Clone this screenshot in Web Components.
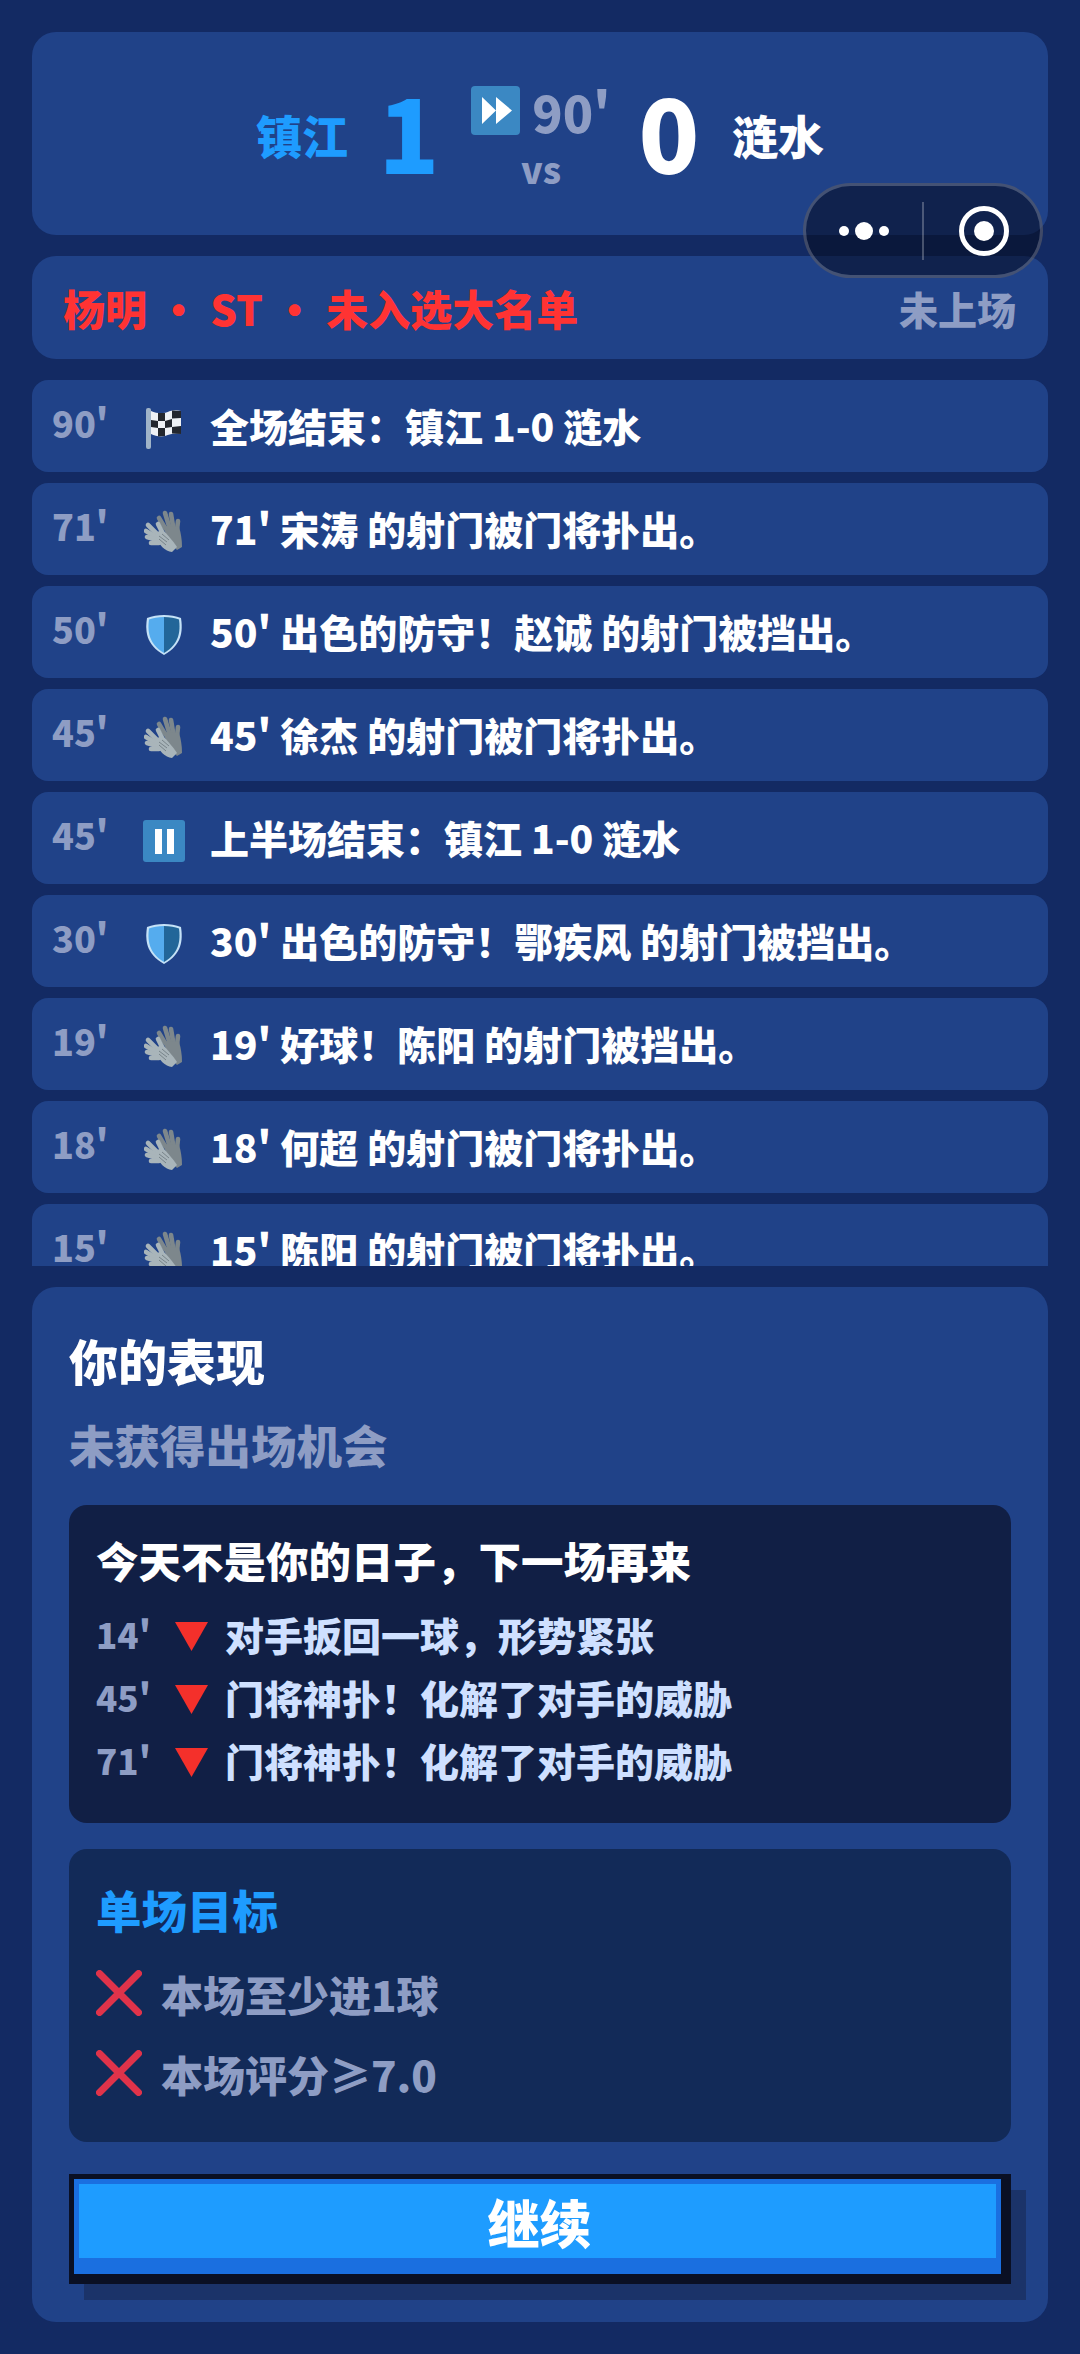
<!DOCTYPE html>
<html lang="zh">
<head>
<meta charset="utf-8">
<title>比赛结果</title>
<style>
  html, body { margin: 0; height: 100%; }
  body {
    background: #132a63;
    color: #fff;
    font-family: "Noto Sans CJK SC", "Noto Sans", sans-serif;
    font-weight: 900;
  }
</style>
</head>
<body>
<match-page>
  <match-header slot="header" home="镇江" away="涟水" home-score="1" away-score="0" minute="90'"></match-header>
  <player-bar slot="player" status="未上场">杨明 · ST · 未入选大名单</player-bar>

  <event-row time="90'" icon="flag">全场结束：镇江 1-0 涟水</event-row>
  <event-row time="71'" icon="gloves">71' 宋涛 的射门被门将扑出。</event-row>
  <event-row time="50'" icon="shield">50' 出色的防守！赵诚 的射门被挡出。</event-row>
  <event-row time="45'" icon="gloves">45' 徐杰 的射门被门将扑出。</event-row>
  <event-row time="45'" icon="pause">上半场结束：镇江 1-0 涟水</event-row>
  <event-row time="30'" icon="shield">30' 出色的防守！鄂疾风 的射门被挡出。</event-row>
  <event-row time="19'" icon="gloves">19' 好球！陈阳 的射门被挡出。</event-row>
  <event-row time="18'" icon="gloves">18' 何超 的射门被门将扑出。</event-row>
  <event-row time="15'" icon="gloves">15' 陈阳 的射门被门将扑出。</event-row>

  <perf-panel slot="panel" heading="你的表现" sub="未获得出场机会">
    <moment-box heading="今天不是你的日子，下一场再来">
      <moment-line time="14'">对手扳回一球，形势紧张</moment-line>
      <moment-line time="45'">门将神扑！化解了对手的威胁</moment-line>
      <moment-line time="71'">门将神扑！化解了对手的威胁</moment-line>
    </moment-box>
    <goal-box heading="单场目标">
      <goal-item>本场至少进1球</goal-item>
      <goal-item>本场评分≥7.0</goal-item>
    </goal-box>
    <pixel-button>继续</pixel-button>
  </perf-panel>
  <mini-capsule slot="capsule"></mini-capsule>
</match-page>

<script>
const ICONS = {
  flag: `<svg viewBox="0 0 40 44" width="40" height="44">
    <rect x="2" y="1" width="5" height="41" rx="2" fill="#9fb3c8"/>
    <path d="M7 4 C14 7 20 7 26 4 C30 3 34 3 37 4 L37 27 C31 26 26 27 21 29 C16 30 11 29 7 27Z" fill="#eef1f5"/>
    <g fill="#23272e">
      <path d="M14 6 L21 6 L21 14 L14 14Z"/><path d="M28 3.5 L37 4 L37 11 L28 11.5Z"/>
      <path d="M7 13 L14 14 L14 21 L7 20Z"/><path d="M21 14 L28 12 L28 20 L21 21Z"/>
      <path d="M14 21 L21 21 L21 29 L14 29.5Z"/><path d="M28 20 L37 19 L37 27 L28 26.5Z"/>
    </g></svg>`,
  gloves: `<svg viewBox="0 0 40 44" width="40" height="44">
    <g stroke="#7d878c" stroke-width="4.6" stroke-linecap="round" fill="none">
      <path d="M21 18 L15 8"/><path d="M25 16 L21 3"/><path d="M29 16 L27 4"/><path d="M33 20 L34 11"/>
    </g>
    <path d="M19 16 L35 17 C37 23 38 30 38 37 L33 40 C27 34 22 26 19 16Z" fill="#7d878c"/>
    <g stroke="#a9b5ba" stroke-width="4.6" stroke-linecap="round" fill="none">
      <path d="M13 24 L4 15"/><path d="M12 27 L2 21"/><path d="M13 30 L3 27"/><path d="M15 33 L7 33"/><path d="M18 22 L14 14"/>
    </g>
    <path d="M11 24 L18 19 C23 24 29 31 33 37 L28 42 C21 41 15 36 11 24Z" fill="#a9b5ba"/>
    <g stroke="#78848a" stroke-width="1" fill="none">
      <path d="M15 26 L23 32"/><path d="M15 29 L22 35"/><path d="M18 24 L25 30"/>
    </g></svg>`,
  shield: `<svg viewBox="0 0 40 44" width="40" height="44">
    <path d="M20 2 C26 2 32 3 37 5 C39 18 38 32 20 42 C2 32 1 18 3 5 C8 3 14 2 20 2Z" fill="#c5e2f7"/>
    <path d="M20 4 C14 4 9 5 5 6.5 C3.5 18 4.5 31 20 40Z" fill="#55acee"/>
    <path d="M20 4 C26 4 31 5 35 6.5 C36.5 18 35.5 31 20 40Z" fill="#226699"/></svg>`,
  pause: `<svg viewBox="0 0 42 42" width="42" height="42">
    <rect width="42" height="42" rx="3" fill="#3b88c3"/>
    <rect x="12" y="9" width="7" height="25" fill="#fff"/><rect x="24" y="9" width="7" height="25" fill="#fff"/></svg>`,
  forward: `<svg viewBox="0 0 49 49" width="49" height="49">
    <rect width="49" height="49" rx="4" fill="#3b88c3"/>
    <path d="M11 11 L25 24.5 L11 38Z M25 11 L41 24.5 L25 38Z" fill="#fff"/></svg>`,
  down: `<svg viewBox="0 0 33 30" width="33" height="30"><path d="M0 0 L33 0 L16.5 29Z" fill="#f4302b"/></svg>`,
  cross: `<svg viewBox="0 0 46 46" width="46" height="46"><path d="M3.5 3.5 L42.5 42.5 M42.5 3.5 L3.5 42.5" stroke="#e0334a" stroke-width="7" stroke-linecap="round"/></svg>`
};

class BaseElement extends HTMLElement {
  constructor() {
    super();
    this.attachShadow({ mode: "open" });
  }

  attr(name) {
    return this.getAttribute(name) ?? "";
  }

  connectedCallback() {
    this.shadowRoot.innerHTML = `<style>${this.constructor.styles}</style>${this.markup()}`;
  }
}

class MatchPage extends BaseElement {
  static get styles() {
    return /* css */`
    :host {
      display: flex;
      flex-direction: column;
      gap: 21px;
      height: 2354px;
      box-sizing: border-box;
      padding: 32px;
      position: relative;
      overflow: hidden;
    }
    .list {
      flex: 1;
      min-height: 0;
      overflow: hidden;
      display: flex;
      flex-direction: column;
      gap: 11px;
    }
    ::slotted(match-header), ::slotted(player-bar), ::slotted(perf-panel) { flex: none; }
    `;
  }
  markup() {
    return /* html */`
    <slot name="header"></slot>
    <slot name="player"></slot>
    <div class="list"><slot></slot></div>
    <slot name="panel"></slot>
    <slot name="capsule"></slot>`;
  }
}

class MatchHeader extends BaseElement {
  static get styles() {
    return /* css */`
    :host {
      display: flex;
      justify-content: center;
      height: 203px;
      background: #204288;
      border-radius: 24px;
    }
    .row { display: flex; align-items: flex-start; padding-top: 47px; }
    .team { font-size: 46px; line-height: 68px; margin-top: 21px; width: 92px; white-space: nowrap; }
    .home { color: #1e9cff; }
    .score { font-size: 100px; line-height: 120px; width: 70px; text-align: center; margin-top: -8px; }
    .mid { width: 134px; display: flex; flex-direction: column; align-items: center; margin-top: 7px; color: #8e9dc4; }
    .minute { display: flex; align-items: center; gap: 12px; font-size: 50px; line-height: 48px; height: 49px; white-space: nowrap; }
    .vs { font-size: 36px; line-height: 44px; margin-top: 11px; }
    svg { display: block; }
    `;
  }
  markup() {
    return /* html */`
    <div class="row">
      <span class="team home">${this.attr("home")}</span>
      <span class="score home" style="margin-left:26px">${this.attr("home-score")}</span>
      <div class="mid" style="margin-left:30px">
        <div class="minute">${ICONS.forward}<span>${this.attr("minute")}</span></div>
        <div class="vs">vs</div>
      </div>
      <span class="score" style="margin-left:26px">${this.attr("away-score")}</span>
      <span class="team" style="margin-left:28px">${this.attr("away")}</span>
    </div>`;
  }
}

class PlayerBar extends BaseElement {
  static get styles() {
    return /* css */`
    :host {
      display: flex;
      align-items: center;
      justify-content: space-between;
      height: 103px;
      box-sizing: border-box;
      padding: 0 32px 0 31px;
      background: #204288;
      border-radius: 24px;
    }
    .name { color: #ff3333; font-size: 42px; word-spacing: 1px; }
    .state { color: #8e9dc4; font-size: 39px; }
    `;
  }
  markup() {
    return `<span class="name"><slot></slot></span><span class="state">${this.attr("status")}</span>`;
  }
}

class EventRow extends BaseElement {
  static get styles() {
    return /* css */`
    :host {
      display: flex;
      flex: none;
      align-items: center;
      height: 92px;
      box-sizing: border-box;
      padding-left: 20px;
      background: #204288;
      border-radius: 16px;
    }
    .time { width: 75px; margin-top: -8px; color: #8e9dc4; font-size: 36px; line-height: 52px; }
    .icon { width: 42px; margin: 5px 25px 0 16px; display: flex; justify-content: center; flex: none; }
    .icon svg { display: block; }
    .text { font-size: 39px; white-space: nowrap; margin-top: -2px; }
    `;
  }
  markup() {
    return /* html */`
    <span class="time">${this.attr("time")}</span>
    <span class="icon">${ICONS[this.attr("icon")]}</span>
    <span class="text"><slot></slot></span>`;
  }
}

class PerfPanel extends BaseElement {
  static get styles() {
    return /* css */`
    :host {
      display: flex;
      flex-direction: column;
      height: 1035px;
      box-sizing: border-box;
      padding: 37px 37px 0;
      background: #204288;
      border-radius: 24px;
    }
    h2 { margin: 0; font-size: 49px; line-height: 72px; font-weight: 900; }
    p { margin: 14px 0 0; font-size: 45.5px; line-height: 68px; color: #8e9dc4; }
    .stack { display: flex; flex-direction: column; margin-top: 27px; }
    `;
  }
  markup() {
    return /* html */`
    <h2>${this.attr("heading")}</h2>
    <p>${this.attr("sub")}</p>
    <div class="stack"><slot></slot></div>`;
  }
}

class MomentBox extends BaseElement {
  static get styles() {
    return /* css */`
    :host {
      display: flex;
      flex-direction: column;
      height: 318px;
      box-sizing: border-box;
      padding: 25px 27px 0;
      background: #111f45;
      border-radius: 18px;
    }
    h3 { margin: 0 0 12px; font-size: 42.5px; line-height: 60px; font-weight: 900; }
    `;
  }
  markup() {
    return `<h3>${this.attr("heading")}</h3><slot></slot>`;
  }
}

class MomentLine extends BaseElement {
  static get styles() {
    return /* css */`
    :host { display: flex; align-items: center; height: 63px; }
    .time { width: 79px; color: #8e9dc4; font-size: 35px; }
    .mark { width: 50px; display: flex; margin-top: 6px; }
    .mark svg { display: block; }
    .text { color: #cfe0ff; font-size: 39px; white-space: nowrap; }
    `;
  }
  markup() {
    return /* html */`
    <span class="time">${this.attr("time")}</span>
    <span class="mark">${ICONS.down}</span>
    <span class="text"><slot></slot></span>`;
  }
}

class GoalBox extends BaseElement {
  static get styles() {
    return /* css */`
    :host {
      display: flex;
      flex-direction: column;
      height: 293px;
      box-sizing: border-box;
      margin-top: 26px;
      padding: 27px 27px 0;
      background: #122a58;
      border-radius: 18px;
    }
    h3 { margin: 0 0 11px; font-size: 45.5px; line-height: 66px; font-weight: 900; color: #1e9cff; }
    `;
  }
  markup() {
    return `<h3>${this.attr("heading")}</h3><slot></slot>`;
  }
}

class GoalItem extends BaseElement {
  static get styles() {
    return /* css */`
    :host { display: flex; align-items: center; gap: 19px; height: 80px; }
    svg { display: block; flex: none; }
    span { color: #8e9dc4; font-size: 42px; white-space: nowrap; }
    `;
  }
  markup() {
    return `${ICONS.cross}<span><slot></slot></span>`;
  }
}

class PixelButton extends BaseElement {
  static get styles() {
    return /* css */`
    :host {
      display: block;
      height: 110px;
      margin-top: 32px;
      box-sizing: border-box;
      border: solid #0a1024;
      border-width: 5px 10px 10px 5px;
      background: #1a6fe0;
      box-shadow: 15px 16px 0 #1b3369;
      padding: 5px 5px 16px;
    }
    .face {
      display: flex;
      align-items: center;
      justify-content: center;
      height: 100%;
      padding-left: 4px;
      box-sizing: border-box;
      background: #1e9cff;
      font-size: 52px;
      font-weight: 900;
      color: #fff;
    }
    `;
  }
  markup() {
    return `<div class="face"><slot></slot></div>`;
  }
}

class MiniCapsule extends BaseElement {
  static get styles() {
    return /* css */`
    :host {
      position: absolute;
      left: 803px;
      top: 183px;
      width: 240px;
      height: 95px;
      box-sizing: border-box;
      display: flex;
      align-items: center;
      border: 3px solid rgba(255, 255, 255, .22);
      border-radius: 48px;
      background: rgba(4, 10, 30, .55);
    }
    .side { flex: 1; display: flex; align-items: center; justify-content: center; }
    .line { width: 2px; height: 58px; background: rgba(255, 255, 255, .25); }
    svg { display: block; }
    `;
  }
  markup() {
    return /* html */`
    <div class="side"><svg viewBox="0 0 50 20" width="50" height="20" fill="#fff"><circle cx="5" cy="10" r="5"/><circle cx="25" cy="10" r="9"/><circle cx="45" cy="10" r="5"/></svg></div>
    <div class="line"></div>
    <div class="side"><svg viewBox="0 0 50 50" width="50" height="50" style="margin-left:3px"><circle cx="25" cy="25" r="22.5" fill="none" stroke="#fff" stroke-width="5"/><circle cx="25" cy="25" r="10" fill="#fff"/></svg></div>`;
  }
}

customElements.define("match-page", MatchPage);
customElements.define("match-header", MatchHeader);
customElements.define("player-bar", PlayerBar);
customElements.define("event-row", EventRow);
customElements.define("perf-panel", PerfPanel);
customElements.define("moment-box", MomentBox);
customElements.define("moment-line", MomentLine);
customElements.define("goal-box", GoalBox);
customElements.define("goal-item", GoalItem);
customElements.define("pixel-button", PixelButton);
customElements.define("mini-capsule", MiniCapsule);
</script>
</body>
</html>
